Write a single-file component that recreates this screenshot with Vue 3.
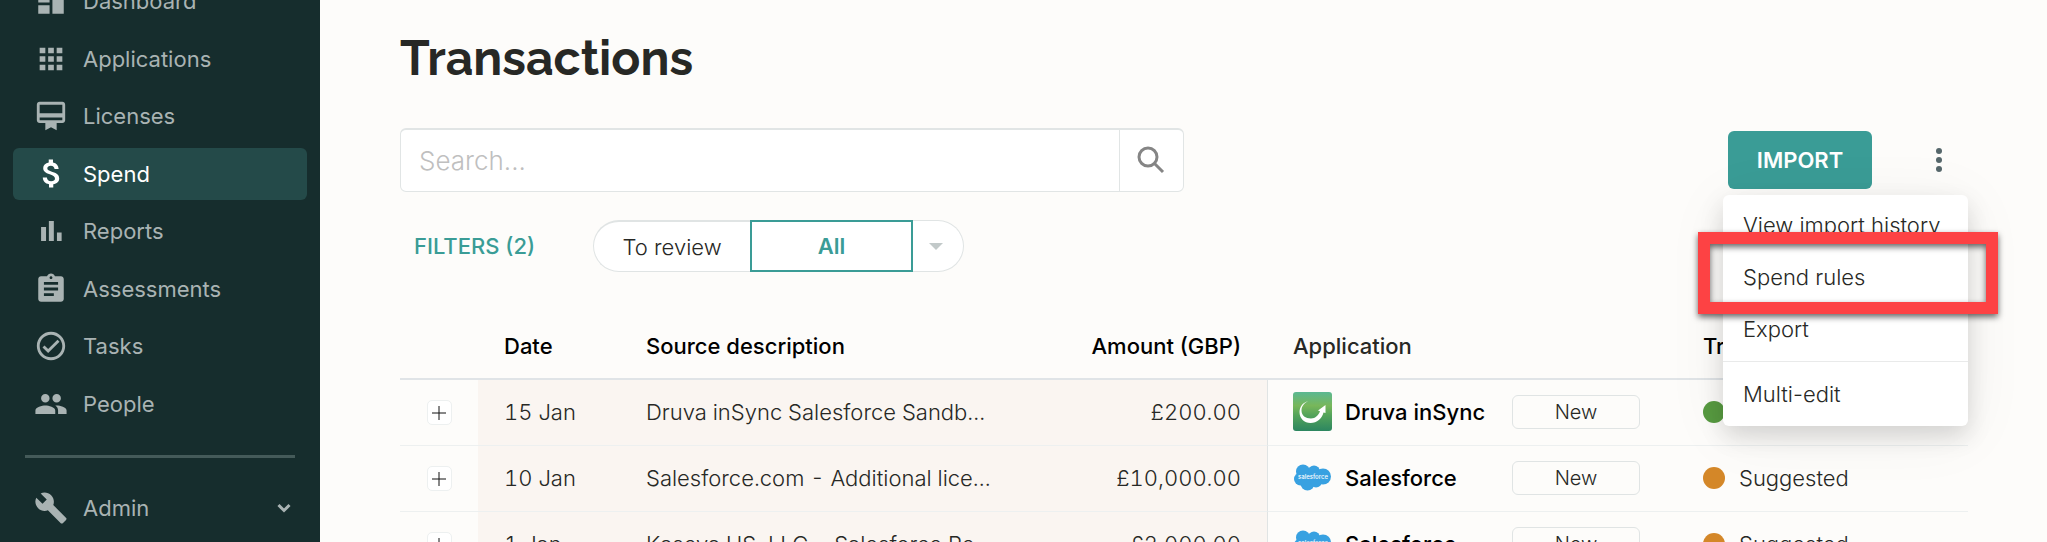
<script setup>
import { ref } from 'vue'

const search = ref('')

const nav = [
  { label: 'Dashboard', path: 'M3 13h8V3H3v10zm0 8h8v-6H3v6zm10 0h8V11h-8v10zm0-18v6h8V3h-8z' },
  { label: 'Applications', path: 'M4 8h4V4H4v4zm6 12h4v-4h-4v4zm-6 0h4v-4H4v4zm0-6h4v-4H4v4zm6 0h4v-4h-4v4zm6-10v4h4V4h-4zm-6 4h4V4h-4v4zm6 6h4v-4h-4v4zm0 6h4v-4h-4v4z' },
  { label: 'Licenses', path: 'M20 2H4c-1.11 0-2 .89-2 2v11c0 1.11.89 2 2 2h4v5l4-2 4 2v-5h4c1.11 0 2-.89 2-2V4c0-1.11-.89-2-2-2zm0 13H4v-2h16v2zm0-5H4V4h16v6z' },
  { label: 'Spend', active: true, path: 'M14.8 15.3c0-1.5-1-2.4-3.7-3.2C8 11.200 6.500 10 6.500 7.700c0-2 1.500-3.500 3.900-3.900V1.800h3v2.100c2.500.5 3.900 2.200 4 4.600h-2.900c-.1-1.500-1-2.400-2.600-2.400-1.500 0-2.500.7-2.500 1.800 0 1.200 1 1.800 3.700 2.600 3.200.9 4.700 2.200 4.700 4.700 0 2.200-1.600 3.700-4.200 4v2.300h-3v-2.300c-2.700-.4-4.300-2.100-4.400-4.700h2.900c.1 1.700 1.200 2.600 3 2.600 1.700 0 2.700-.7 2.700-1.800z' },
  { label: 'Reports', path: 'M5 9.200h3.500V19H5zM10.500 5h3.500v14h-3.500zM16.200 13h3.300v6h-3.300z' },
  { label: 'Assessments', path: 'M19 3h-4.180C14.400 1.840 13.300 1 12 1c-1.300 0-2.400.84-2.820 2H5c-1.100 0-2 .9-2 2v14c0 1.100.9 2 2 2h14c1.100 0 2-.9 2-2V5c0-1.100-.9-2-2-2zm-7 0c.55 0 1 .45 1 1s-.45 1-1 1-1-.45-1-1 .45-1 1-1zm2 14H7v-2h7v2zm3-4H7v-2h10v2zm0-4H7V7h10v2z' },
  { label: 'Tasks', path: 'M12 2C6.480 2 2 6.480 2 12s4.480 10 10 10 10-4.480 10-10S17.520 2 12 2zm0 18c-4.410 0-8-3.590-8-8s3.590-8 8-8 8 3.590 8 8-3.590 8-8 8zm4.590-12.420L10 14.170l-2.590-2.580L6 13l4 4 8-8-1.410-1.420z' },
  { label: 'People', path: 'M16 11c1.660 0 2.990-1.340 2.990-3S17.660 5 16 5c-1.660 0-3 1.340-3 3s1.340 3 3 3zm-8 0c1.660 0 2.990-1.340 2.990-3S9.660 5 8 5C6.340 5 5 6.340 5 8s1.340 3 3 3zm0 2c-2.330 0-7 1.170-7 3.500V19h14v-2.500c0-2.330-4.670-3.500-7-3.500zm8 0c-.29 0-.62.02-.97.05 1.160.84 1.970 1.970 1.970 3.450V19h6v-2.500c0-2.330-4.670-3.500-7-3.500z' },
]

const rows = [
  { date: '15 Jan', description: 'Druva inSync Salesforce Sandb...', amount: '£200.00', app: 'Druva inSync', logo: 'druva', status: 'Matched', tone: 'green' },
  { date: '10 Jan', description: 'Salesforce.com - Additional lice...', amount: '£10,000.00', app: 'Salesforce', logo: 'salesforce', status: 'Suggested', tone: 'amber' },
  { date: '1 Jan', description: 'Kaseya US, LLC - Salesforce Re...', amount: '£2,000.00', app: 'Salesforce', logo: 'salesforce', status: 'Suggested', tone: 'amber' },
]
</script>

<template>
  <div class="layout">
    <aside class="sidebar">
      <nav class="nav">
        <a v-for="item in nav" :key="item.label" href="#" class="nav-item" :class="{ active: item.active }">
          <svg class="nav-icon" viewBox="0 0 24 24"><path :d="item.path" /></svg>
          <span>{{ item.label }}</span>
        </a>
      </nav>
      <div class="admin">
        <a href="#" class="nav-item">
          <svg class="nav-icon" viewBox="0 0 24 24"><path d="M22.700 19l-9.100-9.100c.9-2.300.4-5-1.500-6.900-2-2-5-2.400-7.400-1.300L9 6 6 9 1.600 4.700C.4 7.100.9 10.100 2.900 12.100c1.900 1.900 4.600 2.400 6.900 1.500l9.100 9.100c.4.4 1 .4 1.400 0l2.300-2.300c.5-.4.5-1.100.1-1.400z" /></svg>
          <span>Admin</span>
          <svg class="chevron" viewBox="0 0 14 10"><path d="M1.500 2L7 7.500 12.500 2" /></svg>
        </a>
      </div>
    </aside>

    <main class="main">
      <h1>Transactions</h1>

      <div class="toolbar">
        <form class="search" role="search" @submit.prevent>
          <input v-model="search" type="text" placeholder="Search..." aria-label="Search transactions">
          <button type="submit" aria-label="Search">
            <svg viewBox="0 0 28 28"><circle cx="11" cy="11" r="9" /><path d="M17.500 17.500L26 26" /></svg>
          </button>
        </form>

        <div class="actions">
          <button class="import" type="button">IMPORT</button>
          <button class="more" type="button" aria-label="More actions">
            <svg viewBox="0 0 8 24"><circle cx="4" cy="3" r="3" /><circle cx="4" cy="12" r="3" /><circle cx="4" cy="21" r="3" /></svg>
          </button>
          <div class="menu" role="menu">
            <button type="button" role="menuitem">View import history</button>
            <button type="button" role="menuitem">Spend rules</button>
            <button type="button" role="menuitem">Export</button>
            <hr>
            <button type="button" role="menuitem">Multi-edit</button>
          </div>
          <div class="highlight"></div>
        </div>
      </div>

      <div class="filters">
        <button class="filter-link" type="button">FILTERS (2)</button>
        <div class="segments">
          <button class="segment review" type="button">To review</button>
          <button class="segment all" type="button">All</button>
          <button class="segment drop" type="button" aria-label="More views">
            <svg viewBox="0 0 14 7"><path d="M0 0h14L7 7z" /></svg>
          </button>
        </div>
      </div>

      <table>
        <colgroup>
          <col class="c-expand"><col class="c-date"><col class="c-desc"><col class="c-amount"><col class="c-app"><col class="c-status">
        </colgroup>
        <thead>
          <tr>
            <th></th>
            <th>Date</th>
            <th>Source description</th>
            <th class="right">Amount (GBP)</th>
            <th class="soft">Application</th>
            <th>Transaction status</th>
          </tr>
        </thead>
        <tbody>
          <tr v-for="row in rows" :key="row.date">
            <td class="expand">
              <button type="button" aria-label="Expand row">
                <svg viewBox="0 0 14 14"><path d="M7 0v14M0 7h14" /></svg>
              </button>
            </td>
            <td class="tint">{{ row.date }}</td>
            <td class="tint">{{ row.description }}</td>
            <td class="tint right">{{ row.amount }}</td>
            <td class="app-cell">
              <div class="app">
                <svg v-if="row.logo === 'druva'" class="logo" viewBox="0 0 39 39">
                  <defs>
                    <linearGradient id="druva-fill" x1="0" y1="0" x2="0" y2="1">
                      <stop offset="0" stop-color="#5bb892" />
                      <stop offset="0.35" stop-color="#78b75a" />
                      <stop offset="0.6" stop-color="#53a35a" />
                      <stop offset="1" stop-color="#2c8660" />
                    </linearGradient>
                  </defs>
                  <rect width="39" height="39" rx="3" fill="url(#druva-fill)" />
                  <path fill="#fff" d="M15.500 9C9.500 10.500 6.500 15 6.500 20c0 6.500 4.800 11 11 11 6.500 0 11.500-4.500 13-10.500l2 .5V13l-7.500 5.500 2 .8c-1.500 4-4.500 7.200-9 7.200-5.500 0-9.500-3-9.500-8 0-4 2.500-7.500 7-9.500z" />
                </svg>
                <svg v-else class="logo" viewBox="0 0 39 39">
                  <g fill="#38a1e1">
                    <circle cx="10" cy="13.500" r="7" /><circle cx="21" cy="13.500" r="6" /><circle cx="30" cy="18.500" r="8" />
                    <circle cx="7.500" cy="21" r="6.500" /><circle cx="14.500" cy="25.500" r="7" /><circle cx="23" cy="23.500" r="6" /><path d="M8 13h20v11H8z" />
                  </g>
                  <text x="20" y="20.500" text-anchor="middle" class="logo-text">salesforce</text>
                </svg>
                <span class="app-name">{{ row.app }}</span>
                <button class="tag" type="button">New</button>
              </div>
            </td>
            <td>
              <div class="status"><i class="dot" :class="row.tone"></i>{{ row.status }}</div>
            </td>
          </tr>
        </tbody>
      </table>
    </main>
  </div>
</template>

<style>
body {
  overflow: hidden;
  background: #fdfcfa;
}
</style>

<style scoped>
* {
  box-sizing: border-box;
}

button,
input {
  font: inherit;
  color: inherit;
  border: 0;
  background: none;
  padding: 0;
  margin: 0;
}

.layout {
  display: grid;
  grid-template-columns: 320px minmax(0, 1fr);
  height: 100vh;
  font-family: Inter, "Liberation Sans", sans-serif;
  font-size: 22px;
  font-weight: 300;
  color: #272825;
}

.sidebar {
  display: flex;
  flex-direction: column;
  min-height: 0;
  padding: 0 13px;
  background: #162d2d;
}

.nav {
  flex: 1;
  display: flex;
  flex-direction: column;
  justify-content: space-between;
  margin-top: -25px;
}

.nav-item {
  display: flex;
  align-items: center;
  flex-shrink: 0;
  gap: 15px;
  height: 52px;
  padding: 0 16px 0 21px;
  border-radius: 6px;
  color: #a9b3b3;
  font-weight: 400;
  text-decoration: none;
}

.nav-item.active {
  background: #244a49;
  color: #fff;
}

.nav-icon {
  width: 34px;
  height: 34px;
  fill: currentColor;
}

.chevron {
  width: 14px;
  height: 10px;
  margin-left: auto;
  fill: none;
  stroke: currentColor;
  stroke-width: 3;
}

.admin {
  height: 87px;
  margin-top: 25px;
  padding-top: 27px;
  background: linear-gradient(#445a59, #445a59) center top / calc(100% - 24px) 3px no-repeat;
}

.main {
  min-width: 0;
  height: 100vh;
  overflow: hidden;
  padding: 28px 79px 0 80px;
}

h1 {
  margin: 0;
  font-family: Raleway, Lato, sans-serif;
  font-size: 48px;
  line-height: 60px;
  font-weight: 700;
}

.toolbar {
  display: flex;
  align-items: center;
  justify-content: space-between;
  margin-top: 40px;
}

.search {
  display: flex;
  width: 50%;
  height: 64px;
  border: 1px solid #e1e5e5;
  border-top-width: 2px;
  border-radius: 6px;
  background: #fff;
}

.search input {
  flex: 1;
  min-width: 0;
  padding: 0 18px;
  font-size: 26px;
}

.search input::placeholder {
  color: #bfbfbf;
  opacity: 1;
}

.search button {
  display: grid;
  place-items: center;
  width: 64px;
  padding: 0 2px 2px 0;
  border-left: 1px solid #e1e5e5;
}

.search svg {
  width: 28px;
  height: 28px;
  fill: none;
  stroke: #858585;
  stroke-width: 3;
}

.actions {
  position: relative;
  display: flex;
  align-items: center;
  gap: 38px;
}

.import {
  width: 144px;
  height: 58px;
  border-radius: 6px;
  background: #3a9c96;
  color: #fff;
  font-weight: 600;
}

.more {
  display: grid;
  place-items: center;
  width: 58px;
  height: 58px;
}

.more svg {
  width: 8px;
  height: 24px;
  fill: #56676b;
}

.menu {
  position: absolute;
  top: 64px;
  right: 0;
  width: 245px;
  padding: 4px 0 6px;
  border-radius: 6px;
  background: #fff;
  box-shadow: 0 10px 24px rgba(0, 0, 0, 0.14), 0 8px 64px rgba(0, 0, 0, 0.06);
}

.menu button {
  display: block;
  width: 100%;
  height: 52px;
  padding: 0 20px;
  text-align: left;
  white-space: nowrap;
}

.menu hr {
  height: 1px;
  margin: 6px 0;
  border: 0;
  background: #e9eaea;
}

.highlight {
  position: absolute;
  top: 101px;
  right: -30px;
  width: 300px;
  height: 82px;
  border: 12px solid #fd4244;
  filter: drop-shadow(0 3px 3px rgba(0, 0, 0, 0.6));
  pointer-events: none;
}

.filters {
  display: flex;
  align-items: center;
  gap: 58px;
  margin-top: 28px;
  padding-left: 14px;
}

.filter-link {
  color: #3a9c96;
  font-weight: 500;
}

.segments {
  display: flex;
}

.segment {
  height: 52px;
  border: 1px solid #e0e4e4;
  background: #fff;
}

.review {
  width: 157px;
  border-top-width: 2px;
  border-right: 0;
  border-radius: 26px 0 0 26px;
}

.all {
  width: 163px;
  border: 2px solid #3a9c96;
  color: #3a9c96;
  font-weight: 600;
}

.drop {
  display: grid;
  place-items: center start;
  width: 51px;
  padding-left: 16px;
  border-left: 0;
  border-radius: 0 26px 26px 0;
}

.drop svg {
  width: 14px;
  height: 7px;
  fill: #c2c9c9;
}

table {
  width: 100%;
  margin-top: 42px;
  table-layout: fixed;
  border-collapse: separate;
  border-spacing: 0;
}

.c-expand { width: 78px; }
.c-date { width: 142px; }
.c-desc { width: 409px; }
.c-amount { width: 238px; }
.c-app { width: 410px; }
.c-status { width: 291px; }

th {
  height: 66px;
  padding: 0 26px;
  border-bottom: 2px solid #e0e4e7;
  color: #000;
  font-weight: 500;
  text-align: left;
  white-space: nowrap;
}

th.soft {
  color: #272825;
}

td {
  height: 66px;
  padding: 0 26px 2px;
  border-bottom: 1px solid #edf0f0;
  font-variant-numeric: tabular-nums;
  white-space: nowrap;
}

.right {
  text-align: right;
}

.tint {
  background: #faf5f1;
}

.expand {
  padding: 0 0 2px;
  text-align: center;
}

.expand button {
  display: inline-grid;
  place-items: center;
  width: 25px;
  height: 25px;
  border: 1px solid #edf0f0;
  border-radius: 5px;
  background: #fff;
  vertical-align: middle;
}

.expand svg {
  width: 14px;
  height: 14px;
  stroke: #111;
  stroke-width: 1;
}

.app-cell {
  padding-left: 25px;
  border-left: 1px solid #e0e4e4;
}

.app {
  display: flex;
  align-items: center;
}

.logo {
  width: 39px;
  height: 39px;
  flex-shrink: 0;
}

.logo-text {
  fill: #fff;
  font-size: 6px;
  font-weight: 500;
}

.app-name {
  width: 167px;
  margin-left: 13px;
  color: #000;
  font-weight: 500;
}

.tag {
  width: 128px;
  height: 34px;
  border: 1px solid #e0e4e4;
  border-radius: 6px;
  font-size: 20px;
}

.status {
  display: flex;
  align-items: center;
  gap: 14px;
}

.dot {
  width: 22px;
  height: 22px;
  border-radius: 50%;
}

.green { background: #589b41; }
.amber { background: #d48728; }
</style>
